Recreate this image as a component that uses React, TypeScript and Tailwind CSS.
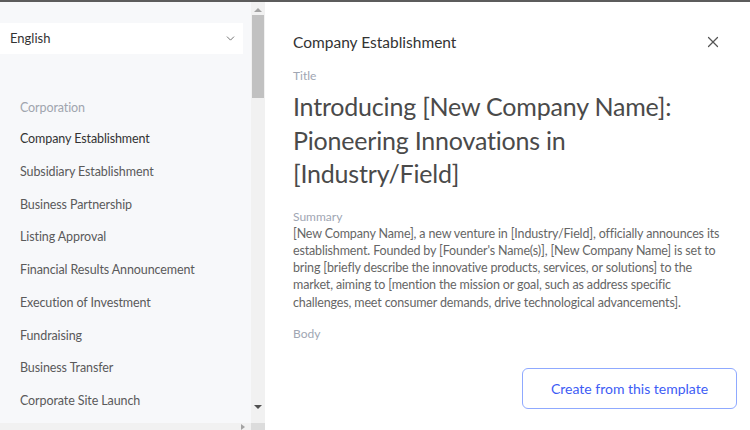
import { X, ChevronDown } from "lucide-react";

const ITEMS = [
  "Company Establishment",
  "Subsidiary Establishment",
  "Business Partnership",
  "Listing Approval",
  "Financial Results Announcement",
  "Execution of Investment",
  "Fundraising",
  "Business Transfer",
  "Corporate Site Launch",
];

const FONT = "font-['Segoe_UI','Lato',sans-serif]";

function Sidebar() {
  return (
    <div className="flex h-full w-[265px] shrink-0 bg-[#f7f8fa]">
      <div className="flex min-w-0 flex-1 flex-col">
        <div className="flex-1 overflow-hidden pt-[21px]">
          <div className="flex h-[31px] w-[243px] items-center justify-between bg-white pl-[10px] pr-[6px] text-[13px] text-[#333]">
            <span>English</span>
            <ChevronDown size={13} strokeWidth={1.5} className="text-[#555]" />
          </div>
          <div className="mt-[44px] pl-[20px] text-[12.5px] leading-[20px] tracking-[-0.1px] text-[#a0a5ae]">Corporation</div>
          <ul className="mt-[11px] flex flex-col gap-[12.75px] pl-[20px] text-[12.5px] leading-[20px] tracking-[-0.1px]">
            {ITEMS.map((it, i) => (
              <li key={it} className={i === 0 ? "text-[#333]" : "text-[#5a5a5a]"}>
                {it}
              </li>
            ))}
          </ul>
        </div>
        {/* horizontal scrollbar */}
        <div className="flex h-[7px] items-start justify-end bg-[#f1f1f1] pr-[6px]">
          <span className="mt-[1px] h-0 w-0 border-y-[3px] border-l-[4px] border-y-transparent border-l-[#a3a3a3]" />
        </div>
      </div>
      {/* vertical scrollbar */}
      <div className="flex w-[14px] flex-col items-center bg-[#f1f1f1]">
        <span className="mt-[6px] h-0 w-0 border-x-[4px] border-b-[4px] border-x-transparent border-b-[#a3a3a3]" />
        <div className="mt-[3px] h-[83px] w-[12px] bg-[#c1c1c1]" />
        <div className="flex-1" />
        <span className="mb-[14px] h-0 w-0 border-x-[4px] border-t-[4px] border-x-transparent border-t-[#505050]" />
        <div className="h-[7px] w-full bg-[#dcdcdc]" />
      </div>
    </div>
  );
}

function Detail() {
  return (
    <div className="flex h-full min-w-0 flex-1 flex-col bg-white">
      <div className="pl-[28px] pr-[28px]">
        <div className="mt-[29px] flex items-center justify-between">
          <span className="text-[15.5px] leading-[22px] text-[#333]">Company Establishment</span>
          <X size={18} strokeWidth={1.6} className="text-[#555]" />
        </div>
        <div className="mt-[15px] text-[12px] leading-[16px] text-[#a0a6b3]">Title</div>
        <h1 className="mt-[6px] text-[25px] leading-[33.5px] tracking-[-0.2px] text-[#4a4a4a]">
          Introducing [New Company Name]: Pioneering Innovations in [Industry/Field]
        </h1>
        <div className="mt-[18px] text-[12px] leading-[16px] text-[#a0a6b3]">Summary</div>
        <p className="text-[12.5px] leading-[17.3px] tracking-[-0.15px] text-[#666]">
          [New Company Name], a new venture in [Industry/Field], officially announces its establishment.
          Founded by [Founder's Name(s)], [New Company Name] is set to bring [briefly describe the innovative
          products, services, or solutions] to the market, aiming to [mention the mission or goal, such as
          address specific challenges, meet consumer demands, drive technological advancements].
        </p>
        <div className="mt-[15px] text-[12px] leading-[16px] text-[#a0a6b3]">Body</div>
      </div>
      <div className="mt-[26px] flex justify-end pr-[13px]">
        <button className="flex h-[41px] w-[215px] items-center justify-center rounded-[6px] border border-[#8fa9ff] bg-white text-[14px] text-[#3d5cf5]">
          Create from this template
        </button>
      </div>
    </div>
  );
}

export default function App() {
  return (
    <div className={`flex h-[430px] w-[750px] flex-col overflow-hidden ${FONT}`}>
      <div className="h-[2px] bg-[#5c5c5c]" />
      <div className="flex min-h-0 flex-1">
        <Sidebar />
        <Detail />
      </div>
    </div>
  );
}
